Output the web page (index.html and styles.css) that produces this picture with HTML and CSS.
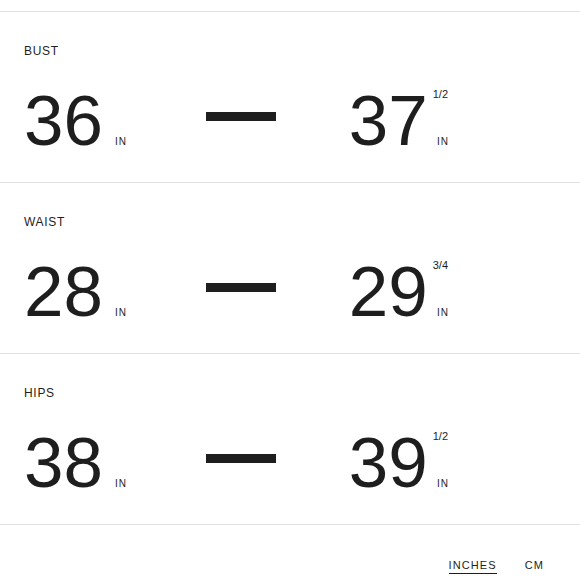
FILE: index.html
```html
<!DOCTYPE html>
<html lang="en">
<head>
<meta charset="utf-8">
<title>Size conversion</title>
<link rel="stylesheet" href="styles.css">
</head>
<body>
<main class="page">
  <section class="row">
    <div class="label">BUST</div>
    <div class="values">
      <div class="group group-left">
        <span class="num">36</span>
        <span class="stack"><span class="frac"></span><span class="unit">IN</span></span>
      </div>
      <div class="dash"></div>
      <div class="group group-right">
        <span class="num">37</span>
        <span class="stack"><span class="frac">1/2</span><span class="unit">IN</span></span>
      </div>
    </div>
  </section>
  <section class="row">
    <div class="label">WAIST</div>
    <div class="values">
      <div class="group group-left">
        <span class="num">28</span>
        <span class="stack"><span class="frac"></span><span class="unit">IN</span></span>
      </div>
      <div class="dash"></div>
      <div class="group group-right">
        <span class="num">29</span>
        <span class="stack"><span class="frac">3/4</span><span class="unit">IN</span></span>
      </div>
    </div>
  </section>
  <section class="row">
    <div class="label">HIPS</div>
    <div class="values">
      <div class="group group-left">
        <span class="num">38</span>
        <span class="stack"><span class="frac"></span><span class="unit">IN</span></span>
      </div>
      <div class="dash"></div>
      <div class="group group-right">
        <span class="num">39</span>
        <span class="stack"><span class="frac">1/2</span><span class="unit">IN</span></span>
      </div>
    </div>
  </section>
  <footer class="units">
    <span class="unit-link active">INCHES</span>
    <span class="unit-link">CM</span>
  </footer>
</main>
</body>
</html>
```
FILE: styles.css
```css
html, body {
  margin: 0;
  padding: 0;
  background: #ffffff;
}

body {
  font-family: "Liberation Sans", Arial, sans-serif;
  color: #1e1e1e;
}

.page {
  padding-top: 11px;
}

.row {
  border-top: 1px solid #e2e2e2;
  padding: 33px 132px 26px 24px;
}

.label {
  font-size: 12px;
  line-height: 12px;
  letter-spacing: 0.7px;
  margin-bottom: 29px;
}

.values {
  display: grid;
  grid-template-columns: 110px 1fr 100px;
  align-items: start;
}

.group {
  display: flex;
  align-items: stretch;
}

.group-right {
  justify-self: end;
}

.num {
  font-size: 71px;
  line-height: 70px;
}

.stack {
  display: flex;
  flex-direction: column;
  justify-content: space-between;
  align-items: flex-end;
  padding: 3px 0 9px;
}

.group-left .stack {
  margin-left: 12px;
}

.group-right .stack {
  margin-left: 5px;
}

.frac {
  font-size: 11px;
  line-height: 11px;
}

.unit {
  font-size: 10px;
  line-height: 10px;
  letter-spacing: 1px;
  margin-right: -1px;
}

.dash {
  justify-self: center;
  width: 70px;
  height: 9px;
  margin-top: 26px;
  background: #1e1e1e;
}

.units {
  border-top: 1px solid #e2e2e2;
  display: flex;
  justify-content: flex-end;
  align-items: flex-start;
  gap: 28px;
  padding: 35px 36px 0 0;
}

.unit-link {
  font-size: 11px;
  line-height: 11px;
  letter-spacing: 1.1px;
  padding-bottom: 2px;
}

.unit-link.active {
  border-bottom: 1px solid #1e1e1e;
}
```
